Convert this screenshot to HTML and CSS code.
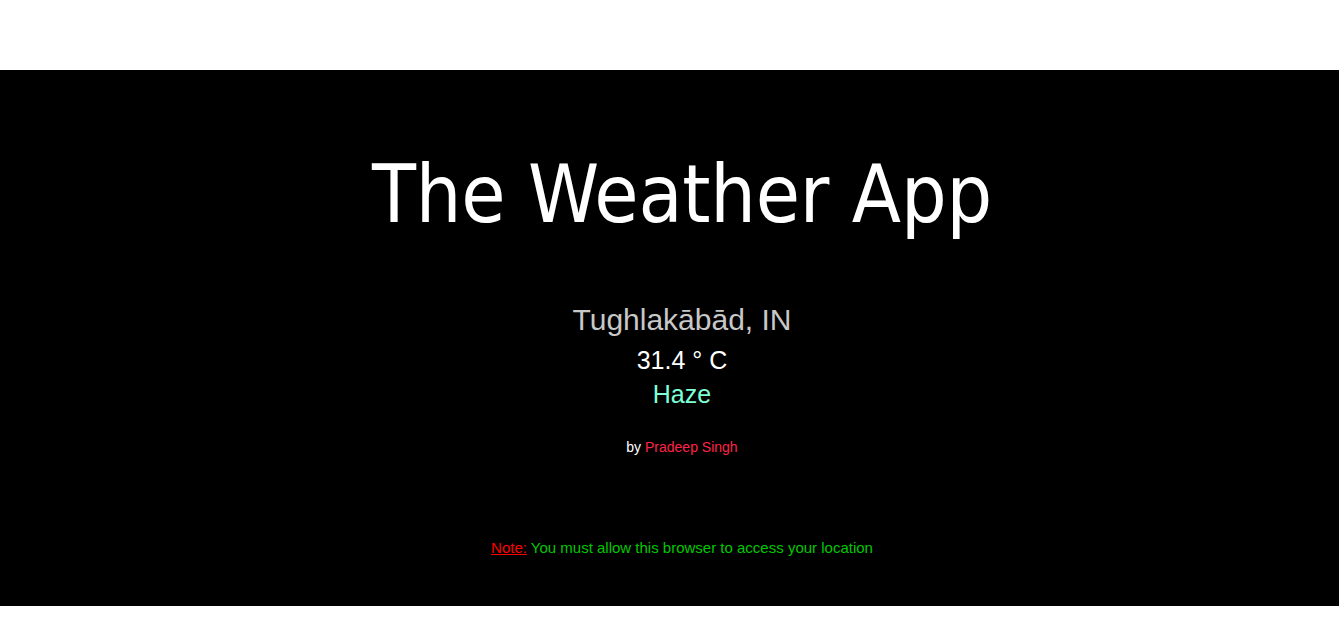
FILE: index.html
```html
<!DOCTYPE html>
<html lang="en">
<head>
<meta charset="utf-8">
<title>The Weather App</title>
<link rel="stylesheet" href="styles.css">
</head>
<body>
<main class="app">
  <h1 class="title">The Weather App</h1>
  <div class="city">Tughlakābād, IN</div>
  <div class="temp">31.4 ° C</div>
  <div class="desc">Haze</div>
  <div class="byline">by <span class="author">Pradeep Singh</span></div>
  <div class="note"><span class="note-label">Note:</span> You must allow this browser to access your location</div>
</main>
</body>
</html>
```

FILE: styles.css
```css
html, body {
  margin: 0;
  padding: 0;
  background: #ffffff;
}

.app {
  box-sizing: border-box;
  margin-top: 70px;
  width: 1339px;
  height: 536px;
  padding: 85px 0 0 25px;
  background: #000000;
  text-align: center;
  font-family: "Liberation Sans", Arial, sans-serif;
  display: flex;
  flex-direction: column;
}

.title {
  margin: 0;
  font-family: "DejaVu Sans Condensed", "DejaVu Sans", sans-serif;
  font-weight: normal;
  font-size: 80px;
  line-height: 80px;
  letter-spacing: -0.2px;
  color: #ffffff;
}

.city {
  margin-top: 66px;
  font-size: 30px;
  line-height: 38px;
  color: #c8c8c8;
}

.temp {
  margin-top: 4px;
  font-size: 25px;
  line-height: 34px;
  color: #ffffff;
}

.desc {
  font-size: 25px;
  line-height: 34px;
  color: #7fffd4;
}

.byline {
  margin-top: 28px;
  font-size: 14px;
  line-height: 16px;
  color: #ffffff;
}

.author {
  color: #ff2248;
}

.note {
  margin-top: 85px;
  font-size: 15px;
  line-height: 16px;
  color: #00c800;
}

.note-label {
  color: #ff0000;
  text-decoration: underline;
}
```
